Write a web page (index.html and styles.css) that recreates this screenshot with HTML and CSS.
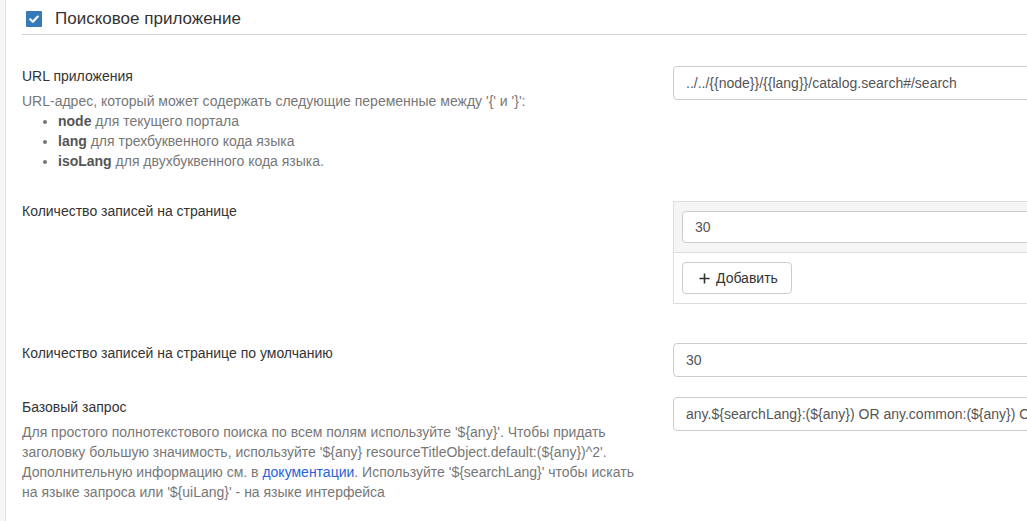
FILE: index.html
```html
<!DOCTYPE html>
<html lang="ru">
<head>
<meta charset="utf-8">
<title>Поисковое приложение</title>
<link rel="stylesheet" href="styles.css">
</head>
<body>
<div class="page">
  <div class="sidebar-strip"></div>
  <main class="main">
    <div class="section-header">
      <span class="checkbox">
        <svg viewBox="0 0 16 16" width="16" height="16"><path d="M4.2 8.3 L6.9 10.8 L11.8 5.6" fill="none" stroke="#fff" stroke-width="2.2" stroke-linecap="round" stroke-linejoin="round"/></svg>
      </span>
      <h2 class="section-title">Поисковое приложение</h2>
    </div>

    <div class="row row-url">
      <div class="label-col">
        <div class="label">URL приложения</div>
        <div class="help">
          URL-адрес, который может содержать следующие переменные между '{' и '}':
          <ul class="help-list">
            <li><b>node</b> для текущего портала</li>
            <li><b>lang</b> для трехбуквенного кода языка</li>
            <li><b>isoLang</b> для двухбуквенного кода языка.</li>
          </ul>
        </div>
      </div>
      <div class="field-col">
        <div class="input">../../{{node}}/{{lang}}/catalog.search#/search</div>
      </div>
    </div>

    <div class="row row-pages">
      <div class="label-col">
        <div class="label">Количество записей на странице</div>
      </div>
      <div class="field-col">
        <div class="panel">
          <div class="panel-heading">
            <div class="input input-sm">30</div>
          </div>
          <div class="panel-body">
            <button class="btn" type="button">
              <svg class="btn-icon" viewBox="0 0 12 12" width="11" height="11"><path d="M6 0.5 V11.5 M0.5 6 H11.5" stroke="#333" stroke-width="1.7" fill="none"/></svg>
              Добавить
            </button>
          </div>
        </div>
      </div>
    </div>

    <div class="row row-default">
      <div class="label-col">
        <div class="label">Количество записей на странице по умолчанию</div>
      </div>
      <div class="field-col">
        <div class="input">30</div>
      </div>
    </div>

    <div class="row row-query">
      <div class="label-col">
        <div class="label">Базовый запрос</div>
        <div class="help">
          Для простого полнотекстового поиска по всем полям используйте '${any}'. Чтобы придать заголовку большую значимость, используйте '${any} resourceTitleObject.default:(${any})^2'. Дополнительную информацию см. в <a href="#" class="link">документации</a>. Используйте '${searchLang}' чтобы искать на языке запроса или '${uiLang}' - на языке интерфейса
        </div>
      </div>
      <div class="field-col">
        <div class="input">any.${searchLang}:(${any}) OR any.common:(${any}) OR index:(${any})^2</div>
      </div>
    </div>
  </main>
</div>
</body>
</html>
```

FILE: styles.css
```css
html, body {
  margin: 0;
  padding: 0;
  background: #fff;
  overflow: hidden;
}

body {
  font-family: "Liberation Sans", Arial, sans-serif;
  font-size: 14px;
  line-height: 20px;
  color: #333;
  width: 1027px;
  height: 521px;
}

.page {
  display: flex;
  min-height: 521px;
}

.sidebar-strip {
  flex: 0 0 5px;
  background: #f7f7f7;
  border-right: 1px solid #e2e2e2;
}

.main {
  flex: 0 0 1400px;
  padding-left: 16px;
}

.section-header {
  box-sizing: border-box;
  height: 35px;
  padding-top: 4px;
  display: flex;
  align-items: center;
  border-bottom: 1px solid #cfcfcf;
}

.checkbox {
  width: 16px;
  height: 16px;
  margin-left: 4px;
  background: #337ab7;
  border-radius: 1px;
  display: flex;
}

.section-title {
  margin: 0 0 0 13px;
  font-size: 17px;
  font-weight: normal;
  line-height: 24px;
  color: #333;
}

.row {
  display: grid;
  grid-template-columns: 651px 1fr;
}

.row-url { margin-top: 31px; margin-bottom: 30px; }
.row-pages { margin-bottom: 39px; }
.row-default { margin-bottom: 20px; }

.label-col {
  max-width: 624px;
}

.label {
  color: #333;
}

.help {
  color: #777;
  font-size: 14px;
  line-height: 20px;
  margin-top: 5px;
}

.help-list {
  margin: 0;
  padding-left: 36px;
}

.help-list b {
  color: #555;
}

.link {
  color: #2a5fd8;
  text-decoration: none;
}

.input {
  box-sizing: border-box;
  height: 34px;
  padding: 6px 12px;
  border: 1px solid #ccc;
  border-radius: 4px;
  color: #555;
  background: #fff;
  white-space: nowrap;
  overflow: hidden;
}

.input-sm {
  height: 32px;
  padding: 5px 12px;
}

.panel {
  border: 1px solid #ddd;
  border-radius: 0;
}

.panel-heading {
  background: #f5f5f5;
  padding: 9px 8px;
  border-bottom: 1px solid #ddd;
}

.panel-body {
  padding: 9px 8px;
  background: #fff;
}

.btn {
  box-sizing: border-box;
  height: 32px;
  display: inline-flex;
  align-items: center;
  gap: 6px;
  padding: 0 13px 0 16px;
  border: 1px solid #ccc;
  border-radius: 4px;
  background: #fff;
  font-family: "Liberation Sans", Arial, sans-serif;
  font-size: 14px;
  color: #333;
}

.btn-icon {
  display: block;
}
```
